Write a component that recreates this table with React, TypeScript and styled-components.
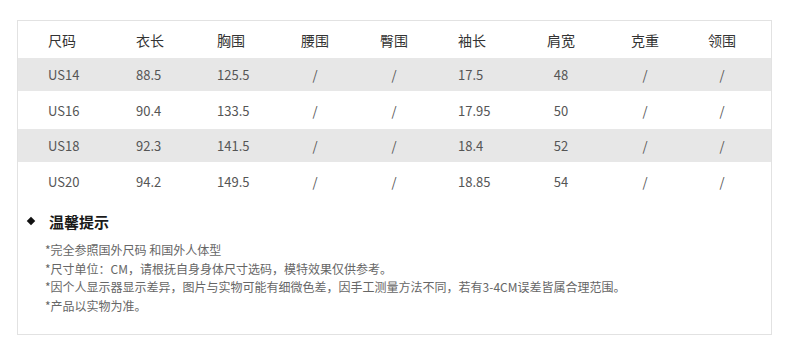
import React, { FC } from 'react'
import styled, { createGlobalStyle } from 'styled-components';

const GlobalStyle = createGlobalStyle`
    html, body {
        margin: 0;
        padding: 0;
        background: #ffffff;
    }
    body {
        font-family: 'Noto Sans CJK SC', 'Noto Sans', sans-serif;
    }
`;

const Page = styled.div`
    width: 790px;
    height: 354px;
    padding: 20px 18px 0 17px;
    box-sizing: border-box;
`;

const Card = styled.div`
    height: 315px;
    border: 1px solid #e2e2e2;
    box-sizing: border-box;
`;

const COLS = '88px 81px 84px 79px 78px 89px 84px 77px 1fr';

const Row = styled.div<{ $h: number; $shade?: boolean }>`
    display: grid;
    grid-template-columns: ${COLS};
    align-items: center;
    height: ${p => p.$h}px;
    padding-left: 30px;
    background: ${p => (p.$shade ? '#e7e7e7' : 'transparent')};
`;

const Cell = styled.div<{ $center?: boolean; $head?: boolean }>`
    width: 28px;
    white-space: nowrap;
    display: flex;
    justify-content: ${p => (p.$center ? 'center' : 'flex-start')};
    font-size: ${p => (p.$head ? '14px' : '13px')};
    color: ${p => (p.$head ? '#333' : '#555')};
`;

const Tips = styled.div`
    padding: 9px 0 0 8px;
`;

const TipTitle = styled.div`
    display: flex;
    align-items: center;
    gap: 15px;
    font-size: 15px;
    font-weight: bold;
    color: #1a1a1a;
    height: 24px;
`;

const Diamond = styled.span`
    width: 6px;
    height: 6px;
    background: #111;
    transform: rotate(45deg);
    margin-left: 2px;
`;

const TipList = styled.div`
    margin-top: 8px;
    padding-left: 19px;
    display: flex;
    flex-direction: column;
`;

const TipLine = styled.div`
    font-size: 12px;
    line-height: 18.7px;
    color: #666;
`;

const headers = ['尺码', '衣长', '胸围', '腰围', '臀围', '袖长', '肩宽', '克重', '领围'];
const centered = [false, false, false, true, true, false, true, true, true];

const rows = [
    { cells: ['US14', '88.5', '125.5', '/', '/', '17.5', '48', '/', '/'], h: 33, shade: true },
    { cells: ['US16', '90.4', '133.5', '/', '/', '17.95', '50', '/', '/'], h: 38, shade: false },
    { cells: ['US18', '92.3', '141.5', '/', '/', '18.4', '52', '/', '/'], h: 33, shade: true },
    { cells: ['US20', '94.2', '149.5', '/', '/', '18.85', '54', '/', '/'], h: 38, shade: false },
];

const tips = [
    '*完全参照国外尺码 和国外人体型',
    '*尺寸单位：CM，请根抚自身身体尺寸选码，模特效果仅供参考。',
    '*因个人显示器显示差异，图片与实物可能有细微色差，因手工测量方法不同，若有3-4CM误差皆属合理范围。',
    '*产品以实物为准。',
];

export const SizeChart: FC = () => {
    return (
        <Card>
            <Row $h={37}>
                {headers.map(h => <Cell key={h} $head>{h}</Cell>)}
            </Row>
            {rows.map(r => (
                <Row key={r.cells[0]} $h={r.h} $shade={r.shade}>
                    {r.cells.map((c, i) => <Cell key={i} $center={centered[i]}>{c}</Cell>)}
                </Row>
            ))}
            <Tips>
                <TipTitle><Diamond />温馨提示</TipTitle>
                <TipList>
                    {tips.map(t => <TipLine key={t}>{t}</TipLine>)}
                </TipList>
            </Tips>
        </Card>
    )
}

export default function App() {
    return (
        <>
            <GlobalStyle />
            <Page>
                <SizeChart />
            </Page>
        </>
    )
}
